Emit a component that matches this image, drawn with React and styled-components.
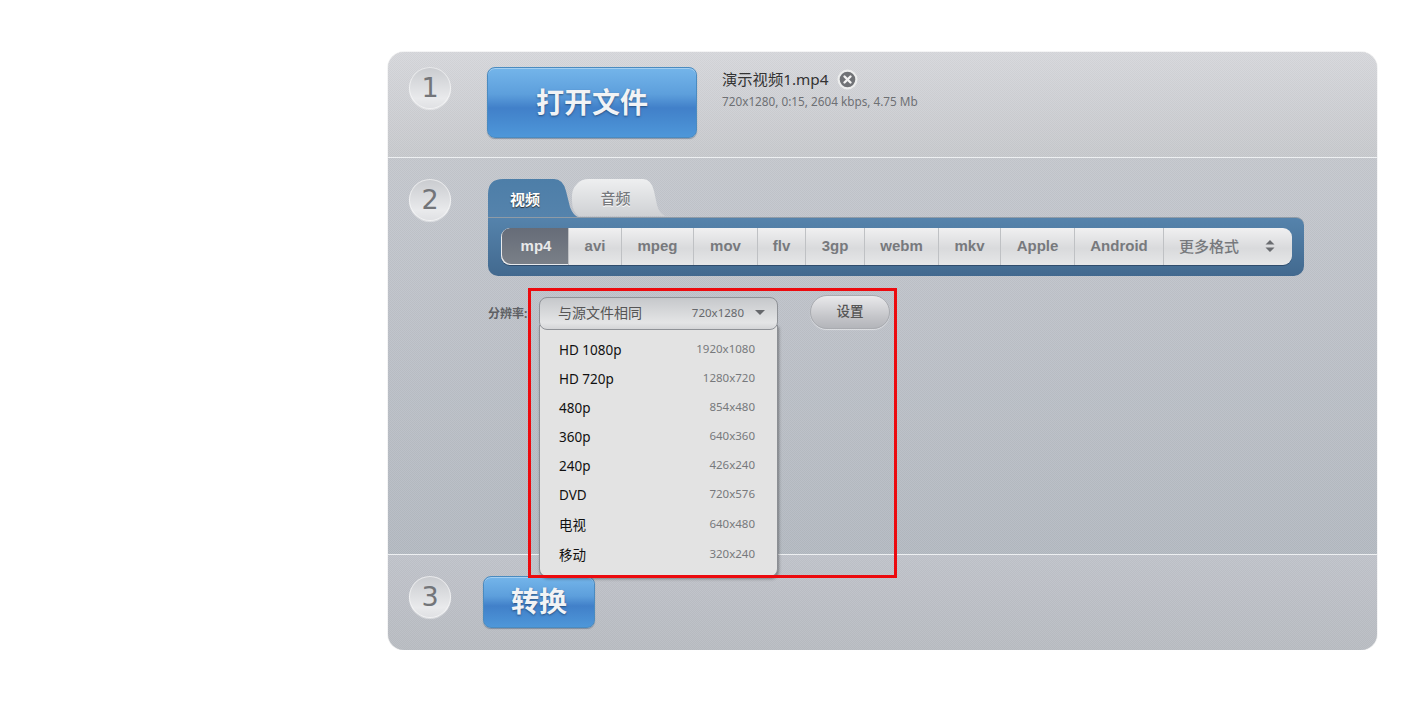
import styled, { createGlobalStyle } from "styled-components";

const FONT = `"Noto Sans", "Noto Sans CJK SC", sans-serif`;
const DOTS = `repeating-conic-gradient(rgba(255,255,255,0.05) 0 25%, rgba(0,0,0,0.025) 0 50%) 0 0 / 2px 2px`;

const ACTIVE_TAB = `path("M0 38 V15 Q0 0 15 0 H66 Q75 0 78 12 L82 28 Q85 36 90 38 Z")`;
const IDLE_TAB = `path("M8 37 Q1 33 1 22 Q0 10 6 5 Q10 0 18 0 H72 Q80 0 83 12 L86 26 Q88 34 94 37 Z")`;

const formats = [
  { name: "mp4", width: 67, active: true },
  { name: "avi", width: 53 },
  { name: "mpeg", width: 72 },
  { name: "mov", width: 64 },
  { name: "flv", width: 48 },
  { name: "3gp", width: 59 },
  { name: "webm", width: 74 },
  { name: "mkv", width: 62 },
  { name: "Apple", width: 74 },
  { name: "Android", width: 89 },
];

const resolutions = [
  ["HD 1080p", "1920x1080"],
  ["HD 720p", "1280x720"],
  ["480p", "854x480"],
  ["360p", "640x360"],
  ["240p", "426x240"],
  ["DVD", "720x576"],
  ["电视", "640x480"],
  ["移动", "320x240"],
];

const GlobalStyle = createGlobalStyle`
  html, body {
    margin: 0;
    background: #fff;
    font-family: ${FONT};
  }
`;

const Panel = styled.main`
  position: relative;
  width: 989px;
  height: 598px;
  margin: 52px 0 0 388px;
  border-radius: 16px;
  box-shadow: 0 0 1px #8f9196;
  display: flex;
  flex-direction: column;
  overflow: hidden;
`;

const Section = styled.section`
  height: ${(p) => p.$height}px;
  flex: none;
  padding: ${(p) => p.$top}px 0 0 21px;
  box-sizing: border-box;
  display: flex;
  align-items: flex-start;
  gap: ${(p) => p.$gap || 36}px;
  background: ${DOTS}, linear-gradient(${(p) => p.$from}, ${(p) => p.$to});
  border-bottom: ${(p) => (p.$line ? "1px solid #eef0f2" : "none")};
`;

const Step = styled.div`
  width: 42px;
  height: 42px;
  flex: none;
  padding-bottom: 2px;
  box-sizing: border-box;
  border-radius: 50%;
  display: flex;
  align-items: center;
  justify-content: center;
  color: #737579;
  font: 27px "DejaVu Sans", sans-serif;
  background: linear-gradient(#c9cbcf, #e9eaec 75%, #dfe0e3);
  box-shadow: inset 0 0 0 1px rgba(255, 255, 255, 0.55), 0 1px 1px rgba(255, 255, 255, 0.5);
`;

const BlueButton = styled.button`
  width: ${(p) => p.$width}px;
  height: ${(p) => p.$height}px;
  flex: none;
  padding: 0 0 4px;
  border: 1px solid #4a8bc0;
  border-radius: 8px;
  color: #f1f3f5;
  font: bold 28px ${FONT};
  text-shadow: 0 1px 2px rgba(30, 60, 100, 0.75);
  background: linear-gradient(#74b5ea, #5d9fdc 38%, #4180c9 58%, #4e97d9);
  box-shadow: inset 0 1px 0 rgba(255, 255, 255, 0.35), 0 1px 1px rgba(70, 90, 120, 0.5);
`;

const FileInfo = styled.div`
  padding-top: 1px;
  margin-left: -11px;
`;

const FileName = styled.div`
  display: flex;
  align-items: center;
  gap: 8px;
  color: #333;
  font-size: 15.3px;
  line-height: 22px;
`;

const FileMeta = styled.div`
  margin-top: 3px;
  color: #6e7074;
  font-size: 11.75px;
  line-height: 16px;
`;

const FormatArea = styled.div`
  width: 816px;
`;

const Tabs = styled.div`
  display: flex;
  height: 38px;
  align-items: flex-start;
`;

const Tab = styled.div`
  flex: none;
  width: ${(p) => (p.$active ? 90 : 94)}px;
  height: ${(p) => (p.$active ? 38 : 37)}px;
  margin-left: ${(p) => (p.$active ? 0 : -7)}px;
  padding: 0 ${(p) => (p.$active ? 26 : 5)}px 0 ${(p) => (p.$active ? 10 : 0)}px;
  box-sizing: border-box;
  display: flex;
  align-items: center;
  justify-content: center;
  font-size: 15px;
  font-weight: ${(p) => (p.$active ? 700 : 500)};
  color: ${(p) => (p.$active ? "#fff" : "#77797d")};
  text-shadow: ${(p) => (p.$active ? "0 1px 1px #2c2c2c" : "0 1px 0 #fff")};
  clip-path: ${(p) => (p.$active ? ACTIVE_TAB : IDLE_TAB)};
  background: ${(p) =>
    p.$active
      ? "linear-gradient(#4d7ea8, #5583ac)"
      : "linear-gradient(#eeeff0, #cfd1d4)"};
`;

const Bar = styled.div`
  height: 59px;
  padding: 10px 12px 0 13px;
  box-sizing: border-box;
  border-radius: 0 8px 10px 10px;
  border-top: 1px solid #8f9ba6;
  background: linear-gradient(#5583ac, #42698f);
`;

const Formats = styled.ul`
  display: flex;
  height: 37px;
  margin: 0;
  padding: 0;
  list-style: none;
  border-radius: 9px;
  overflow: hidden;
  background: linear-gradient(#f0f0f1, #d9dadc 55%, #e6e7e8);
  box-shadow: 0 1px 0 #2f4c6c;
`;

const Format = styled.li`
  width: ${(p) => p.$width}px;
  flex: none;
  box-sizing: border-box;
  padding: 0 0 2px ${(p) => (p.$active ? 3 : 0)}px;
  display: flex;
  align-items: center;
  justify-content: center;
  font: bold 15px "Liberation Sans", sans-serif;
  color: ${(p) => (p.$active ? "#e8e9ea" : "#77797d")};
  border-left: ${(p) => (p.$active ? "none" : "1px solid #bfc1c4")};
  background: ${(p) => (p.$active ? "linear-gradient(#666c78, #7a8088)" : "none")};
  box-shadow: ${(p) => (p.$active ? "inset 1px -1px 0 #e8eaec" : "none")};
  border-radius: ${(p) => (p.$active ? "9px 0 0 9px" : "0")};
`;

const MoreFormats = styled.li`
  flex: 1;
  display: flex;
  align-items: center;
  justify-content: space-between;
  padding: 0 16px 2px 15px;
  border-left: 1px solid #bfc1c4;
  color: #77797d;
  font-size: 15px;
  font-weight: 500;
`;

const Settings = styled.div`
  display: flex;
  align-items: flex-start;
  margin-top: 19px;
`;

const SettingLabel = styled.label`
  width: 51px;
  flex: none;
  padding-top: 11px;
  color: #5e6064;
  font-size: 12px;
  font-weight: 700;
  line-height: 16px;
  white-space: nowrap;
`;

const SelectWrap = styled.div`
  position: relative;
  width: 239px;
  flex: none;
  margin-top: 2px;
`;

const SelectBox = styled.div`
  position: relative;
  z-index: 2;
  height: 33px;
  box-sizing: border-box;
  padding: 0 12px 3px 18px;
  display: flex;
  align-items: center;
  border: 1px solid #8f9297;
  border-radius: 8px;
  background: linear-gradient(#c6c8cb, #e4e5e6 80%, #d4d5d7);
  color: #555;
  font-size: 14px;
`;

const SelectSize = styled.span`
  margin-left: auto;
  color: #66686c;
  font-size: 11.5px;
`;

const Caret = styled.i`
  width: 0;
  height: 0;
  margin-left: 11px;
  border: 5px solid transparent;
  border-top: 5px solid #66686c;
  border-bottom: 0;
`;

const Menu = styled.ul`
  position: absolute;
  z-index: 1;
  top: 28px;
  left: 0;
  right: 0;
  height: 252px;
  box-sizing: border-box;
  margin: 0;
  padding: 10px 22px 0 19px;
  list-style: none;
  background: #e3e3e3;
  border: 1px solid #8c8f94;
  border-top: 0;
  border-radius: 0 0 8px 8px;
  box-shadow: 1px 2px 3px rgba(40, 40, 40, 0.45);
`;

const MenuItem = styled.li`
  height: 29px;
  display: flex;
  align-items: center;
  justify-content: space-between;
  color: #111;
  font-size: 13.5px;
  &:nth-child(n + 7) {
    height: 30px;
  }
`;

const MenuSize = styled.span`
  position: relative;
  top: -1px;
  color: #77797c;
  font-size: 11.5px;
`;

const Highlight = styled.div`
  position: absolute;
  z-index: 3;
  top: -9px;
  left: -11px;
  width: 369px;
  height: 290px;
  box-sizing: border-box;
  border: 3px solid #ec0a0e;
  pointer-events: none;
`;

const SettingsButton = styled.button`
  width: 80px;
  height: 34px;
  flex: none;
  margin-left: 32px;
  padding: 0 0 4px;
  border: 1px solid #a9abb0;
  border-radius: 17px;
  color: #555;
  font: 500 13.5px ${FONT};
  background: linear-gradient(#e9e9eb, #c4c5c9 65%, #b3b5ba);
  box-shadow: 0 1px 1px rgba(255, 255, 255, 0.5);
`;

const CloseIcon = () => (
  <svg width="21" height="21" viewBox="0 0 21 21" aria-hidden="true">
    <circle cx="10.5" cy="10.5" r="10" fill="#eceded" />
    <circle cx="10.5" cy="10.5" r="7.8" fill="#707276" />
    <path d="M7.5 7.5l6 6M13.5 7.5l-6 6" stroke="#f2f2f2" strokeWidth="2.4" strokeLinecap="round" />
  </svg>
);

const SortIcon = () => (
  <svg width="12" height="14" viewBox="0 0 12 14" aria-hidden="true">
    <path d="M6 1l4.5 4.5h-9zM6 13L1.5 8.5h9z" fill="#6a6c70" />
  </svg>
);

export default function App() {
  return (
    <>
      <GlobalStyle />
      <Panel>
        <Section $height={106} $top={15} $from="#d7d8dc" $to="#c8cace" $line>
          <Step>1</Step>
          <BlueButton $width={210} $height={71}>打开文件</BlueButton>
          <FileInfo>
            <FileName>
              演示视频1.mp4 <CloseIcon />
            </FileName>
            <FileMeta>720x1280, 0:15, 2604 kbps, 4.75 Mb</FileMeta>
          </FileInfo>
        </Section>
        <Section $height={397} $top={21} $gap={37} $from="#c5c8ce" $to="#b4bac2" $line>
          <Step>2</Step>
          <FormatArea>
            <Tabs>
              <Tab $active>视频</Tab>
              <Tab>音频</Tab>
            </Tabs>
            <Bar>
              <Formats>
                {formats.map((f) => (
                  <Format key={f.name} $width={f.width} $active={f.active}>
                    {f.name}
                  </Format>
                ))}
                <MoreFormats>
                  更多格式
                  <SortIcon />
                </MoreFormats>
              </Formats>
            </Bar>
            <Settings>
              <SettingLabel>分辨率:</SettingLabel>
              <SelectWrap>
                <SelectBox>
                  与源文件相同
                  <SelectSize>720x1280</SelectSize>
                  <Caret />
                </SelectBox>
                <Menu>
                  {resolutions.map(([label, size]) => (
                    <MenuItem key={size}>
                      {label}
                      <MenuSize>{size}</MenuSize>
                    </MenuItem>
                  ))}
                </Menu>
                <Highlight />
              </SelectWrap>
              <SettingsButton>设置</SettingsButton>
            </Settings>
          </FormatArea>
        </Section>
        <Section $height={95} $top={21} $gap={32} $from="#c1c4cb" $to="#b9bdc3">
          <Step>3</Step>
          <BlueButton $width={112} $height={52}>转换</BlueButton>
        </Section>
      </Panel>
    </>
  );
}
